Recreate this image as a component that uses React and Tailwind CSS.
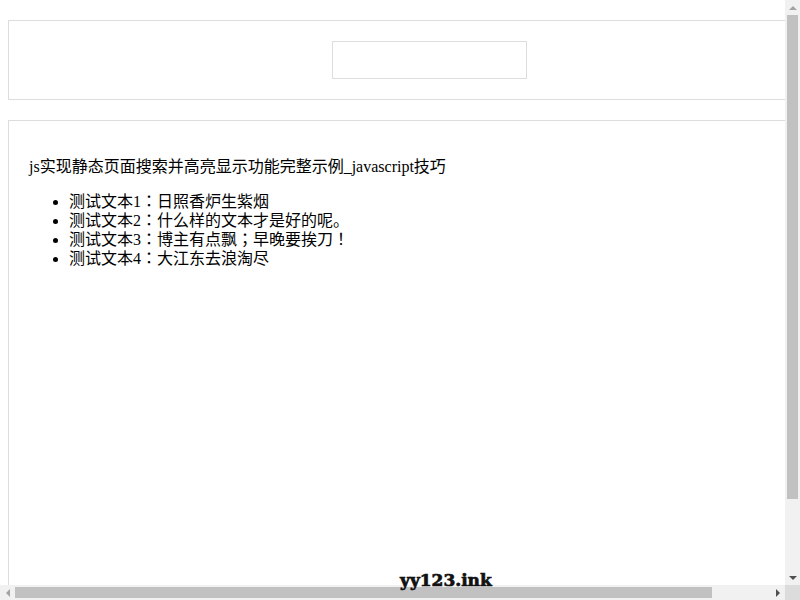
import React from "react";

const items = [
  "测试文本1：日照香炉生紫烟",
  "测试文本2：什么样的文本才是好的呢。",
  "测试文本3：博主有点飘；早晚要挨刀！",
  "测试文本4：大江东去浪淘尽",
];

export default function App() {
  return (
    <div className="relative flex h-[600px] w-[800px] flex-col overflow-hidden bg-white text-black [font-family:'Liberation_Serif','Noto_Sans_CJK_JP',serif]">
      <div className="flex h-[585px]">
        {/* page */}
        <div className="h-[585px] w-[785px] overflow-hidden">
          <div className="w-[858px] px-2 pt-5">
            <div className="border border-[#dddddd] p-5">
              <div className="flex justify-center">
                <input className="h-[38px] w-[195px] border border-[#dddddd] outline-none" />
              </div>
            </div>
            <div className="mt-5 h-[560px] border border-[#dddddd] p-5">
              <p className="my-4 text-base leading-[19px]">js实现静态页面搜索并高亮显示功能完整示例_javascript技巧</p>
              <ul className="my-4 list-disc pl-10 text-base leading-[19px]">
                {items.map((t) => (
                  <li key={t}>{t}</li>
                ))}
              </ul>
            </div>
          </div>
        </div>
        {/* vertical scrollbar */}
        <div className="flex w-[15px] flex-col bg-[#f1f1f1]">
          <div className="flex h-[15px] items-center justify-center">
            <div className="h-0 w-0 border-x-[4px] border-b-[4px] border-x-transparent border-b-[#a3a3a3]" />
          </div>
          <div className="mx-[2px] h-[484px] bg-[#c1c1c1]" />
          <div className="flex-1" />
          <div className="flex h-[15px] items-center justify-center">
            <div className="h-0 w-0 border-x-[4px] border-t-[4px] border-x-transparent border-t-[#505050]" />
          </div>
        </div>
      </div>
      {/* horizontal scrollbar */}
      <div className="flex h-[15px]">
        <div className="flex w-[785px] items-center bg-[#f1f1f1]">
          <div className="flex h-[15px] w-[15px] items-center justify-center">
            <div className="h-0 w-0 border-y-[4px] border-r-[4px] border-y-transparent border-r-[#a3a3a3]" />
          </div>
          <div className="h-[11px] w-[697px] bg-[#c1c1c1]" />
          <div className="flex-1" />
          <div className="flex h-[15px] w-[15px] items-center justify-center">
            <div className="h-0 w-0 border-y-[4px] border-l-[4px] border-y-transparent border-l-[#505050]" />
          </div>
        </div>
        <div className="w-[15px] bg-[#dcdcdc]" />
      </div>
      {/* watermark */}
      <div className="absolute left-[400px] top-[570px] text-[17px] font-black leading-[20px] text-[#111] [-webkit-text-stroke:0.7px_#111] [font-family:'DejaVu_Serif',serif]">
        yy123.ink
      </div>
    </div>
  );
}
